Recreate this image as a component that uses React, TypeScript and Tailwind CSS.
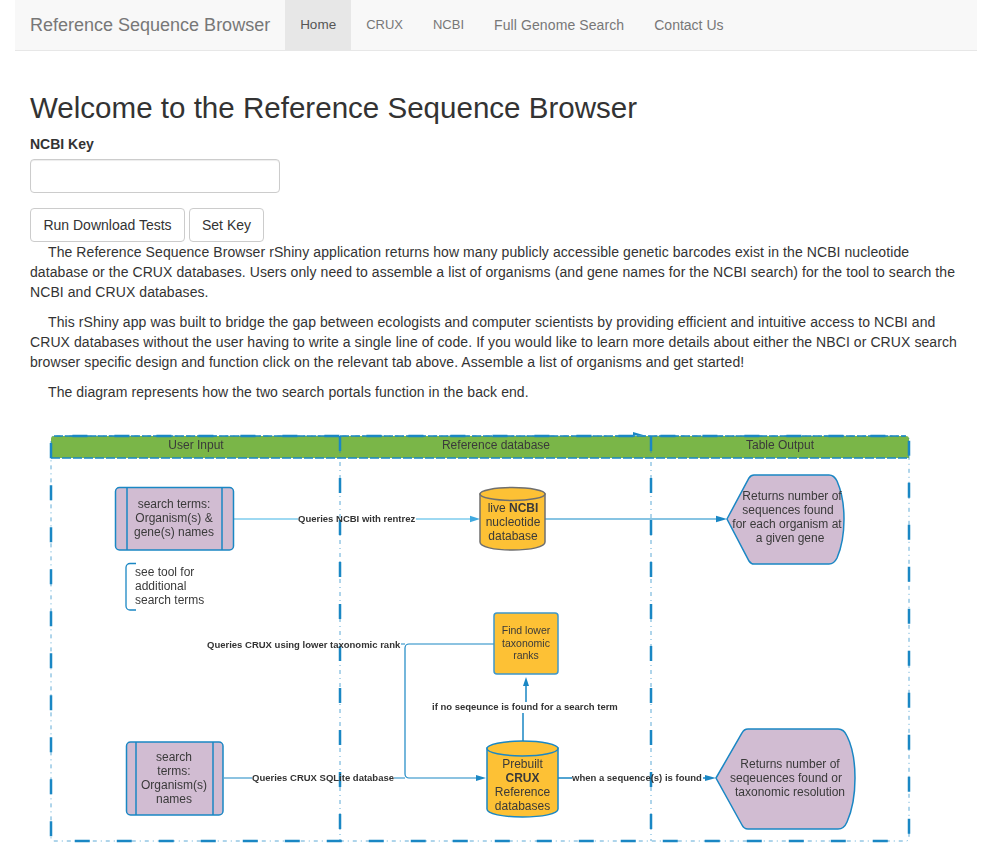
import React from 'react';

const navLinks = [
    { label: 'CRUX', size: 'text-[13px]' },
    { label: 'NCBI', size: 'text-[13px]' },
    { label: 'Full Genome Search', size: 'text-sm tracking-[0.1px]' },
    { label: 'Contact Us', size: 'text-sm' },
];

const BLUE = '#1a87c4';
const LIGHT = '#7fcdee';
const PURPLE = '#d1bcd2';
const GOLD = '#fdc135';
const INK = '#3a3a3a';

// centred block of diagram text, one entry per line
const Lines: React.FC<{ x: number; ys: number[]; lines: React.ReactNode[]; size?: number }> = ({ x, ys, lines, size = 12 }) => (
    <g fontSize={size} fill={INK} textAnchor="middle" dominantBaseline="central">
        {lines.map((line, i) => (
            <text key={i} x={x} y={ys[i]}>{line}</text>
        ))}
    </g>
);

const EdgeLabel: React.FC<{ x: number; y: number; children: React.ReactNode }> = ({ x, y, children }) => (
    <text x={x} y={y} fontSize={9.5} fontWeight={700} fill="#333" dominantBaseline="central">{children}</text>
);

const LaneLine: React.FC<{ d: string }> = ({ d }) => (
    <g fill="none" stroke={BLUE}>
        <path d={d} strokeWidth={1} strokeOpacity={0.7} strokeDasharray="4 4 1 4" />
        <path d={d} strokeWidth={2.5} strokeDasharray="15 27" />
    </g>
);

const Diagram: React.FC = () => (
    <svg viewBox="30 412 932 445" className="block w-[932px] h-[445px] blur-[0.3px]">
        {/* swimlane header and frame */}
        <path d="M51 458V439a3 3 0 0 1 3-3H906a3 3 0 0 1 3 3V458Z" fill="#7ab648" />
        <path d="M54 436H906M51 458H909" stroke={BLUE} strokeWidth={1.5} strokeDasharray="9 2" fill="none" />
        <LaneLine d="M51 458V439a3 3 0 0 1 3-3H906a3 3 0 0 1 3 3V838a3 3 0 0 1-3 3H54a3 3 0 0 1-3-3V458" />
        <LaneLine d="M340 436V841" />
        <LaneLine d="M651 436V841" />
        <path d="M633 432L645 435.5H633Z" fill={BLUE} />
        <Lines x={196} ys={[445]} lines={['User Input']} />
        <Lines x={496} ys={[445]} lines={['Reference database']} />
        <Lines x={780} ys={[445]} lines={['Table Output']} />

        {/* connectors */}
        <g fill="none" strokeWidth={1.5}>
            <path d="M233 519H298M416 519H472" stroke={LIGHT} />
            <path d="M545 519H718" stroke="#5fb0da" />
            <path d="M494 644H409a4 4 0 0 0-4 4V774a4 4 0 0 0 4 4H478M401 644H405M224 778H252M394 778H405" stroke={BLUE} strokeWidth={1.2} />
            <path d="M526 686V702M523 713V741M558 778H572M703 778H708" stroke={BLUE} />
        </g>
        <path d="M470 515.7L480 519L470 522.3Z" fill="#3fa9e0" />
        <path d="M716 515.7L727 519L716 522.3Z" fill={BLUE} />
        <path d="M476 775L486 778L476 781Z" fill={BLUE} />
        <path d="M705 775L716 778L705 781Z" fill={BLUE} />
        <path d="M523 686L526 677L529 686Z" fill={BLUE} />

        {/* search terms, top */}
        <rect x={115.5} y={487.5} width={118} height={62.5} rx={4} fill={PURPLE} stroke={BLUE} strokeWidth={1.5} />
        <path d="M127 488V550M222 488V550" stroke={BLUE} strokeWidth={1.5} />
        <Lines x={174} ys={[504, 518, 532]} lines={['search terms:', 'Organism(s) &', 'gene(s) names']} />

        {/* bracket note */}
        <path d="M136 563.5H130a4 4 0 0 0-4 4V606a4 4 0 0 0 4 4H136" fill="none" stroke={BLUE} strokeWidth={1.3} />
        <g fontSize={12} fill={INK} dominantBaseline="central">
            <text x={135} y={572}>see tool for</text>
            <text x={135} y={586}>additional</text>
            <text x={135} y={600}>search terms</text>
        </g>

        {/* NCBI cylinder */}
        <path d="M480 494V542C480 547 494 550 512.5 550S545 547 545 542V494Z" fill={GOLD} stroke="#6f6f6f" strokeWidth={1.5} />
        <ellipse cx={512.5} cy={494} rx={32.5} ry={6.5} fill={GOLD} stroke="#6f6f6f" strokeWidth={1.5} />
        <Lines x={513} ys={[508, 522, 536]} lines={[<>live <tspan fontWeight={700}>NCBI</tspan></>, 'nucleotide', 'database']} />

        {/* output hexagon, top */}
        <path d="M727 519L749 478Q751 475 754 475H829Q834 475 837 481Q844 497 844 519Q844 542 837 558Q834 564 829 564H754Q751 564 749 561Z" fill={PURPLE} stroke={BLUE} strokeWidth={1.5} />
        <g fontSize={12} fill={INK} textAnchor="middle" dominantBaseline="central">
            <text x={792} y={496}>Returns number of</text>
            <text x={788} y={510}>sequences found</text>
            <text x={787} y={524}>for each organism at</text>
            <text x={790} y={538}>a given gene</text>
        </g>

        {/* find lower ranks */}
        <rect x={494} y={613} width={64} height={61} rx={3} fill={GOLD} stroke="#3f97c9" strokeWidth={1.5} />
        <Lines x={526} ys={[630, 642.5, 655]} lines={['Find lower', 'taxonomic', 'ranks']} size={10.5} />

        {/* search terms, bottom */}
        <rect x={126.5} y={742} width={96.5} height={73} rx={4} fill={PURPLE} stroke={BLUE} strokeWidth={1.5} />
        <path d="M136 742V815M213 742V815" stroke={BLUE} strokeWidth={1.5} />
        <Lines x={174} ys={[757, 771, 785, 799]} lines={['search', 'terms:', 'Organism(s)', 'names']} />

        {/* CRUX cylinder */}
        <path d="M487 748V809C487 814 503 817 522.5 817S558 814 558 809V748Z" fill={GOLD} stroke={BLUE} strokeWidth={1.5} />
        <ellipse cx={522.5} cy={748.5} rx={35.5} ry={7.5} fill={GOLD} stroke={BLUE} strokeWidth={1.5} />
        <Lines x={522.5} ys={[764, 778, 792, 805.5]} lines={['Prebuilt', <tspan fontWeight={700}>CRUX</tspan>, 'Reference', 'databases']} />

        {/* output hexagon, bottom */}
        <path d="M716 778L742 733Q744 729 748 729H838Q844 729 847 736Q855 752 855 778Q855 804 847 822Q844 829 838 829H748Q744 829 742 825Z" fill={PURPLE} stroke={BLUE} strokeWidth={1.5} />
        <g fontSize={12} fill={INK} textAnchor="middle" dominantBaseline="central">
            <text x={790} y={764}>Returns number of</text>
            <text x={786} y={778}>seqeuences found or</text>
            <text x={790} y={792}>taxonomic resolution</text>
        </g>

        <EdgeLabel x={298} y={518.5}>Queries NCBI with rentrez</EdgeLabel>
        <EdgeLabel x={207} y={644}>Queries CRUX using lower taxonomic rank</EdgeLabel>
        <EdgeLabel x={432} y={706.5}>if no seqeunce is found for a search term</EdgeLabel>
        <EdgeLabel x={252} y={777.5}>Queries CRUX SQLite database</EdgeLabel>
        <EdgeLabel x={572} y={777.5}>when a sequence(s) is found</EdgeLabel>
    </svg>
);

export default function App() {
    return (
        <div className="font-['Liberation_Sans',Arial,sans-serif] text-sm leading-5 text-[#333] bg-white">
            <nav className="mx-[15px] h-[51px] flex bg-[#f8f8f8] border-b border-[#e7e7e7]">
                <a className="px-[15px] h-[50px] flex items-center text-lg text-[#777]">Reference Sequence Browser</a>
                <a className="w-[66px] h-[50px] flex items-center justify-center text-[13.5px] bg-[#e7e7e7] text-[#555]">Home</a>
                {navLinks.map((link) => (
                    <a key={link.label} className={`px-[15px] h-[50px] flex items-center text-[#777] ${link.size}`}>{link.label}</a>
                ))}
            </nav>
            <main className="px-[30px] pt-[40px]">
                <h1 className="text-[29.55px] leading-[33px] font-normal mb-[10px]">Welcome to the Reference Sequence Browser</h1>
                <label className="block font-bold mb-[5px]">NCBI Key</label>
                <input type="text" className="block w-[250px] h-[34px] mb-[15px] px-3 rounded border border-[#ccc] bg-white shadow-[inset_0_1px_1px_rgba(0,0,0,0.075)]" />
                <div className="flex gap-1">
                    <button className="h-[34px] w-[155px] rounded border border-[#ccc] bg-white">Run Download Tests</button>
                    <button className="h-[34px] w-[75px] rounded border border-[#ccc] bg-white">Set Key</button>
                </div>
                <div className="tracking-[0.08px]">
                    <p className="mb-[10px] indent-[18px]">The Reference Sequence Browser rShiny application returns how many publicly accessible genetic barcodes exist in the NCBI nucleotide database or the CRUX databases. Users only need to assemble a list of organisms (and gene names for the NCBI search) for the tool to search the NCBI and CRUX databases.</p>
                    <p className="mb-[10px] indent-[18px]">This rShiny app was built to bridge the gap between ecologists and computer scientists by providing efficient and intuitive access to NCBI and CRUX databases without the user having to write a single line of code. If you would like to learn more details about either the NBCI or CRUX search browser specific design and function click on the relevant tab above. Assemble a list of organisms and get started!</p>
                    <p className="mb-[10px] indent-[18px]">The diagram represents how the two search portals function in the back end.</p>
                </div>
            </main>
            <div className="px-[30px]">
                <Diagram />
            </div>
        </div>
    );
}
